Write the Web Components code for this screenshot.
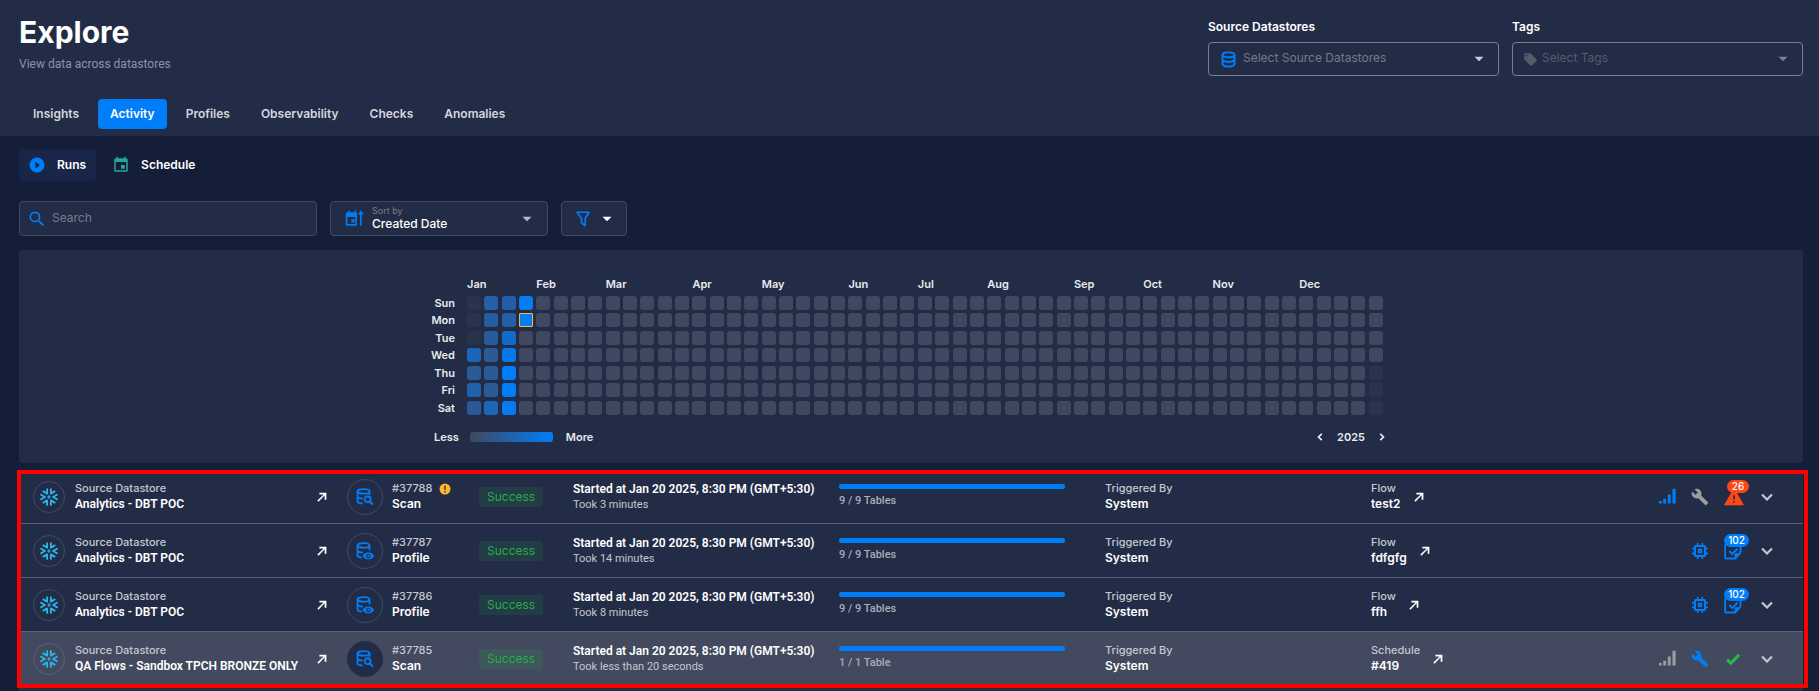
<!DOCTYPE html>
<html lang="en">
<head>
<meta charset="utf-8">
<title>Explore</title>
<style>
html{height:100%;background:#151e38}
body{margin:0;min-height:100%;font-family:Inter,"Noto Sans",sans-serif;font-size:12px;line-height:16px;color:#fff;
--page:#151e38;--panel:#232c46;--line:#424a62;--blue:#007df8;--compact:Roboto,"Noto Sans",sans-serif}
</style>
</head>
<body>
<explore-page></explore-page>
<script>
const ICONS={
search:'<path fill="currentColor" d="M9.5 3A6.5 6.5 0 0 1 16 9.5c0 1.61-.59 3.09-1.56 4.23l.27.27h.79l5 5-1.5 1.5-5-5v-.79l-.27-.27A6.52 6.52 0 0 1 9.5 16a6.5 6.5 0 0 1 0-13m0 2a4.5 4.5 0 1 0 0 9 4.5 4.5 0 0 0 0-9Z"/>',
down:'<path fill="none" stroke="currentColor" stroke-width="2.600" d="m6 9 6 6 6-6"/>',
left:'<path fill="none" stroke="currentColor" stroke-width="3" d="m15 6.500-5.500 5.500 5.500 5.500"/>',
right:'<path fill="none" stroke="currentColor" stroke-width="3" d="m9 6.500 5.500 5.500L9 17.500"/>',
caret:'<path fill="currentColor" d="m6 9 6 6 6-6z"/>',
play:'<path fill="currentColor" fill-rule="evenodd" d="M12 2a10 10 0 1 0 0 20 10 10 0 0 0 0-20M10 16.500v-9l6 4.500z"/>',
calendar:'<path fill="currentColor" d="M19 19H5V8h14m-3-7v2H8V1H6v2H5a2 2 0 0 0-2 2v14a2 2 0 0 0 2 2h14a2 2 0 0 0 2-2V5a2 2 0 0 0-2-2h-1V1m-1 11h-5v5h5z"/>',
sort:'<path fill="currentColor" fill-rule="evenodd" d="M3 4h1V2h2v2h6V2h2v2h1v17H1V6a2 2 0 0 1 2-2m0 6v9h10v-9zm5 3h4v4H8z"/><path fill="currentColor" d="M19 21V7h-3l4-5 4 5h-3v14z"/>',
filter:'<path fill="none" stroke="currentColor" stroke-width="2.200" stroke-linejoin="round" d="M4 3h16l-5 8v10l-5-4v-6z"/>',
tag:'<path fill="currentColor" fill-rule="evenodd" d="M21.410 11.580l-9-9A2 2 0 0 0 11 2H4a2 2 0 0 0-2 2v7c0 .55.220 1.050.590 1.410l9 9c.360.360.860.590 1.410.590s1.050-.230 1.410-.590l7-7c.370-.360.590-.860.590-1.410s-.230-1.060-.590-1.420M5.500 7a1.500 1.500 0 1 1 0-3 1.500 1.500 0 0 1 0 3z"/>',
database:'<g fill="none" stroke="currentColor" stroke-width="2.700"><ellipse cx="12" cy="5.500" rx="8.500" ry="3.500"/><path d="M3.500 5.500v13c0 1.800 4 3.500 8.500 3.500s8.500-1.700 8.500-3.500v-13M3.500 12c0 1.800 4 3.500 8.500 3.500s8.500-1.700 8.500-3.500"/></g>',
snow:'<g stroke="#29b5e8" stroke-width="2.500" fill="none" stroke-linecap="round" stroke-linejoin="round"><path d="M9.500 1.500v6L4.500 4.500M14.500 1.500v6l5-3M9.500 22.500v-6l-5 3M14.500 22.500v-6l5 3M1.500 9 6.500 12l-5 3M22.500 9l-5 3 5 3"/><path stroke-width="1.400" d="m12 10.300 1.700 1.700-1.700 1.700-1.700-1.700z"/></g>',
scan:'<g fill="none" stroke="currentColor" stroke-width="2.400"><ellipse cx="10" cy="4.500" rx="8" ry="3"/><path d="M2 4.500v13c0 2 3 3 7 3M2 11c0 2 3 3 7 3M18 4.500V9"/><circle cx="15.500" cy="15" r="4"/><path stroke-width="2.700" d="m18.500 18 4 4"/></g>',
profile:'<g fill="none" stroke="currentColor" stroke-width="2.400"><ellipse cx="10" cy="4.500" rx="8" ry="3"/><path d="M2 4.500v13c0 2 2 3 6 3M2 11c0 2 3 3 7 3M18 4.500V11"/></g><path fill="currentColor" fill-rule="evenodd" d="M9 18.500c2-6 13-6 15 0-2 6-13 6-15 0m7.500-3a3 3 0 1 0 0 6 3 3 0 0 0 0-6m0 1.500a1.500 1.500 0 1 1 0 3 1.500 1.500 0 0 1 0-3"/>',
open:'<path fill="currentColor" d="M4 18.200 14.800 7.500H7.500V4.500h12v12h-3V9.200L6 20.200z"/>',
warn:'<circle cx="12" cy="12" r="11" fill="#fcb72e"/><path d="M12 5v9M12 16v3" stroke="#232c46" stroke-width="2.500"/>',
signal:'<path fill="currentColor" d="M0 18.500h4V22H0zM6 15h4v7H6zM12.500 9h4v13h-4zM19 1h4.500v21H19z"/>',
wrench:'<path fill="currentColor" d="m22.700 19-9.100-9.100c.9-2.300.4-5-1.500-6.900-2-2-5-2.400-7.400-1.300L9 6 6 9 1.600 4.700C.4 7.100.9 10.100 2.900 12.100c1.900 1.900 4.600 2.400 6.900 1.500l9.100 9.100c.4.4 1 .4 1.400 0l2.300-2.300c.5-.4.5-1.100.1-1.400z"/>',
chip:'<g fill="none" stroke="currentColor" stroke-width="3"><rect x="4.500" y="4.500" width="15" height="15" rx="1"/><path stroke-width="2.500" d="M8.500 0v4M15.500 0v4M8.500 20v4M15.500 20v4M0 8.500h4M0 15.500h4M20 8.500h4M20 15.500h4M10 10h4v4h-4z"/></g>',
note:'<g fill="none" stroke="currentColor" stroke-width="2.400"><path d="M22 14V3H3a1.500 1.500 0 0 0-1.500 1.500v16A1.500 1.500 0 0 0 3 22h12l7-8"/><path d="m7 12 4 4 7-7"/></g><path fill="currentColor" d="M14 23v-8h9z"/>',
alert:'<path fill="currentColor" fill-rule="evenodd" d="M0 22h24L12 1zM11 10v5h2v-5zm0 7v2h2v-2z"/>',
check:'<path fill="currentColor" d="m9 20.420-6.210-6.210 2.830-2.830L9 14.770l9.880-9.890 2.830 2.830z"/>'
};
const SIZES={alert:20,signal:17,chip:16};
class Base extends HTMLElement{
  connectedCallback(){ if(!this.shadowRoot) this.attachShadow({mode:'open'}).innerHTML='<style>*{box-sizing:border-box}button,input,select{font:inherit;color:inherit;border:0;background:none;padding:0;margin:0;outline:0}a{color:inherit;text-decoration:none}</style>'+this.render(); }
  attr(n){ return this.getAttribute(n)||''; }
}
customElements.define('ui-icon',class extends Base{
  render(){const s=this.attr('size')||18;
  return `<style>:host{display:block;flex:none;width:${s}px;height:${s}px}svg{display:block}</style><svg width="${s}" height="${s}" viewBox="0 0 24 24" aria-hidden="true">${ICONS[this.attr('name')]}</svg>`}
});
customElements.define('filter-select',class extends Base{
  render(){return `<style>
  :host{display:block}
  label{display:block;font-weight:600}
  .box{display:flex;align-items:center;height:34px;margin-top:7px;padding:0 10px 0 11px;border:1px solid #7c7f86;border-radius:4px}
  .in{display:flex;align-items:center;gap:6px;flex:1;min-width:0;color:#777a82}
  select{flex:1;min-width:0;height:30px;padding-bottom:2px;appearance:none;opacity:1}
  ui-icon{color:var(--icon-color)} .caret{color:#cbcdd6}
  :host([disabled]) .in{gap:4px;color:#565b68} :host([disabled]) .box{padding-left:10px} :host([disabled]) .caret{color:#7d8291}
  </style><label for="s">${this.attr('label')}</label>
  <div class="box"><div class="in"><ui-icon name="${this.attr('icon')}" size="${this.attr('icon-size')}"></ui-icon><select id="s" ${this.hasAttribute('disabled')?'disabled':''}><option>${this.attr('placeholder')}</option></select></div><ui-icon class="caret" name="caret" size="18"></ui-icon></div>`}
});
customElements.define('page-header',class extends Base{
  render(){return `<style>
  :host{display:block;background:var(--panel);padding:0 16px 7px 19px}
  .top{display:flex;justify-content:space-between;min-height:99px}
  h1{margin:14px 0 0;font-size:30px;line-height:36px;font-weight:700}
  p{margin:6px 0 0;font-family:var(--compact);font-size:12px;color:#8e93a2}
  .filters{display:grid;grid-template-columns:1fr 1fr;gap:13px;width:34%;max-width:595px;padding-top:19px}
  .db{--icon-color:var(--blue)} .tag{--icon-color:#565b68}
  nav{display:flex;gap:7px;margin-left:2px}
  button{height:30px;padding:0 12px;border-radius:4px;font-weight:600;color:#d3d6dc}
  button[aria-selected=true]{background:var(--blue);color:#fff}
  </style>
  <div class="top"><div><h1>Explore</h1><p>View data across datastores</p></div>
  <div class="filters"><filter-select class="db" label="Source Datastores" icon="database" icon-size="17" placeholder="Select Source Datastores"></filter-select><filter-select class="tag" disabled label="Tags" icon="tag" icon-size="15" placeholder="Select Tags"></filter-select></div></div>
  <nav role="tablist">${['Insights','Activity','Profiles','Observability','Checks','Anomalies'].map(t=>`<button role="tab" aria-selected="${t==='Activity'}">${t}</button>`).join('')}</nav>`}
});
customElements.define('run-toolbar',class extends Base{
  render(){return `<style>
  :host{display:block;padding-top:13px}
  .views{display:flex;gap:7px}
  .views button{display:flex;align-items:center;gap:11px;height:32px;padding:0 10px 0 9px;border-radius:4px;font-weight:600}
  .views .on{background:#18264a}
  .views .on ui-icon{color:var(--blue)} .views button:last-child ui-icon{color:#26a69a}
  .controls{display:flex;gap:13px;margin-top:20px}
  .box{display:flex;align-items:center;height:35px;border:1px solid var(--line);border-radius:4px;background:var(--panel)}
  .blue{color:var(--blue)}
  .search{width:298px;padding:0 7px;gap:5px}
  input{flex:1;min-width:0;padding-bottom:2px} input::placeholder{color:#777c88;opacity:1}
  .sort{width:218px;padding:0 11px 0 14px;gap:8px}
  .field{flex:1;min-width:0}
  .field label{display:block;font-size:9px;line-height:10px;color:#777c88;padding-top:1px}
  .field select{display:block;width:100%;height:16px;appearance:none;font-weight:500}
  .caret{color:#b5b9c3}
  .filter{width:66px;justify-content:center;gap:6px;padding:0 5px 0 6px}
  </style>
  <div class="views"><button class="on"><ui-icon name="play" size="18"></ui-icon>Runs</button><button><ui-icon name="calendar" size="18"></ui-icon>Schedule</button></div>
  <div class="controls"><div class="box search"><ui-icon class="blue" name="search" size="20"></ui-icon><input type="search" aria-label="Search" placeholder="Search"></div>
  <div class="box sort"><ui-icon class="blue" name="sort" size="19"></ui-icon><div class="field"><label for="sort">Sort by</label><select id="sort"><option>Created Date</option></select></div><ui-icon class="caret" name="caret" size="18"></ui-icon></div>
  <button class="box filter" aria-label="Filter"><ui-icon class="blue" name="filter" size="18"></ui-icon><ui-icon name="caret" size="18"></ui-icon></button></div>`}
});
customElements.define('activity-heatmap',class extends Base{
  render(){
    const hot=[['','','','#1b66b9','#2a5995','#2161ac','#2a5995'],['#2460a8','#265d9f','#2a5b99','#2c5a94','#2a5a97','#2a5a97','#1c66b8'],['#225fab','#245fa6','#136bc9','#0479ea','#007df8','#007df8','#067bf0'],['#057cf2','#057cf2 sel']];
    const months=[['Jan',0],['Feb',4],['Mar',8],['Apr',13],['May',17],['Jun',22],['Jul',26],['Aug',30],['Sep',35],['Oct',39],['Nov',43],['Dec',48]];
    let cells='';
    for(let c=0;c<53;c++)for(let r=0;r<7;r++){
      const out=(c===0&&r<3)||(c===52&&r>3), v=(hot[c]||[])[r]||'', [col,sel]=v.split(' ');
      cells+=`<i class="${out?'out':''} ${sel||''}" ${col?`style="background:${col}"`:''}></i>`;
    }
    return `<style>
  :host{display:flex;justify-content:center;min-height:213px;margin-top:14px;padding:25px 18px 14px 16px;background:var(--panel);border-radius:4px;font-size:11px;font-weight:600;color:#e8eaef}
  .wrap{width:952px;display:grid;grid-template-columns:21px 1fr;column-gap:12px;align-content:start}
  .months{grid-column:2;display:grid;grid-template-columns:repeat(53,minmax(0,1fr));height:21px;line-height:18px;white-space:nowrap}
  .days{display:grid;grid-template-columns:21px;grid-template-rows:repeat(7,1fr);height:122px;text-align:right;line-height:14px;justify-items:end}
  .cells{display:grid;grid-auto-flow:column;grid-template-rows:repeat(7,1fr);grid-auto-columns:minmax(0,1fr);height:122px}
  i{width:14px;height:14px;border-radius:3px;background:#40485f}
  .out{background:#2a334c} .sel{border:1px solid #fcb72e;border-radius:1px}
  .foot{grid-column:1/-1;display:flex;align-items:center;height:16px;margin-top:11px}
  .bar{width:83px;height:10px;margin:0 13px 0 11px;border-radius:3px;background:linear-gradient(90deg,#40485f,#007df8)}
  .year{display:flex;align-items:center;gap:10px;margin:0 -3px 0 auto}
  .year button{display:flex}
  </style>
  <div class="wrap"><div class="months">${months.map(m=>`<span style="grid-column:${m[1]+1};grid-row:1">${m[0]}</span>`).join('')}</div>
  <div class="days">${['Sun','Mon','Tue','Wed','Thu','Fri','Sat'].map(d=>`<span>${d}</span>`).join('')}</div><div class="cells">${cells}</div>
  <div class="foot"><span>Less</span><span class="bar"></span><span>More</span><span class="year"><button aria-label="Previous year"><ui-icon name="left" size="14"></ui-icon></button><span>2025</span><button aria-label="Next year"><ui-icon name="right" size="14"></ui-icon></button></span></div></div>`}
});
customElements.define('count-badge',class extends Base{
  render(){return `<style>:host{position:absolute;top:-7px;right:-7px;min-width:22px;height:13px;padding:0 4px;border-radius:7px;background:currentColor;font-size:10px;line-height:13px;font-weight:500;text-align:center}span{color:#fff}</style><span><slot></slot></span>`}
});
customElements.define('run-row',class extends Base{
  render(){
    const a=n=>this.attr(n), scan=a('op')==='Scan';
    const link=`<a href="#" aria-label="Open"><ui-icon name="open" size="14"></ui-icon></a>`;
    const acts=a('acts').split(',').map(x=>{const [n,c,k]=x.split(':');return `<span class="act ${c}"><ui-icon name="${n}" size="${SIZES[n]||18}"></ui-icon>${k?`<count-badge>${k}</count-badge>`:''}</span>`}).join('');
    return `<style>
  :host{display:grid;grid-template-columns:minmax(0,314fr) minmax(0,132fr) minmax(0,94fr) repeat(3,minmax(0,266fr)) minmax(0,210fr) minmax(0,210fr);align-items:center;height:54px;padding:0 12px 0 14px;background:var(--panel);border-bottom:1px solid #5c6377;font-weight:600}
  :host([active]){background:#434a5f}
  .store,.op,.flow,.acts{display:flex;align-items:center}
  .mark{display:grid;place-items:center;flex:none;width:32px;height:32px;margin-right:10px;border:1px solid #424a62;border-radius:50%}
  .op .mark{width:36px;height:36px;margin-right:9px;color:var(--blue)}
  :host([active]) .mark{border-color:#5b6277} :host([active]) .op .mark{background:var(--panel);border-color:var(--panel)}
  .store a{margin-left:auto;margin-right:18px}
  .two span,.two b{display:block;white-space:nowrap}
  .two span{font-size:11px;line-height:15px;color:#c5c8d0;font-weight:500}
  .two b{font-size:12px;line-height:16px;font-weight:600}
  .store b,.when b{font-family:var(--compact)}
  .two .num{display:flex;align-items:center;gap:7px}
  .chip{justify-self:start;height:20px;padding:0 8px;border-radius:3px;line-height:20px;background:rgba(30,180,70,.13);color:#22ad4a;font-weight:400}
  .when em{display:block;font-style:normal;font-family:var(--compact);font-weight:400;font-size:11px;line-height:16px;color:#c5c8d0}
  progress{display:block;appearance:none;width:calc(100% - 40px);height:5px;margin-bottom:4px;border:0;border-radius:2px;overflow:hidden;background:#424a62}
  progress::-webkit-progress-bar{background:#424a62} progress::-webkit-progress-value{background:var(--blue)}
  .tables{font-family:var(--compact);font-size:11px;line-height:16px;font-weight:500;color:#a9adb9}
  .flow{gap:11px}
  .acts{justify-content:flex-end;gap:15px;padding-right:16px}
  .acts button,.act{position:relative;display:grid;place-items:center;width:18px;height:20px}
  .blue{color:var(--blue)} .grey{color:#9c9c9c} .red{color:#ff4713} .green{color:#27b84a} .down{color:#c3c6cf}
  </style>
  <div class="store"><span class="mark"><ui-icon name="snow" size="18"></ui-icon></span><div class="two"><span>Source Datastore</span><b>${a('store')}</b></div>${link}</div>
  <div class="op"><span class="mark"><ui-icon name="${scan?'scan':'profile'}" size="18"></ui-icon></span><div class="two"><span class="num">#${a('run')}${this.hasAttribute('warning')?'<ui-icon name="warn" size="12"></ui-icon>':''}</span><b>${a('op')}</b></div></div>
  <div class="chip">Success</div>
  <div class="two when"><b>Started at Jan 20 2025, 8:30 PM (GMT+5:30)</b><em>${a('took')}</em></div>
  <div><progress max="1" value="1" aria-label="Progress"></progress><div class="tables">${a('tables')}</div></div>
  <div class="two"><span>Triggered By</span><b>System</b></div>
  <div class="flow"><div class="two"><span>${a('kind')}</span><b>${a('flow')}</b></div>${link}</div>
  <div class="acts">${acts}<button class="down" aria-label="Expand"><ui-icon name="down" size="20"></ui-icon></button></div>`}
});
customElements.define('run-list',class extends Base{
  render(){return `<style>
  :host{display:block;position:relative;margin-top:7px}
  .next{height:5px;background:var(--panel)}
  .frame{position:absolute;inset:0 -5px 3px -2px;border:4px solid #f00;pointer-events:none}
  </style><slot></slot><div class="next"></div><div class="frame"></div>`}
});
customElements.define('explore-page',class extends Base{
  render(){return `<style>
  :host{display:block} main{padding:0 16px 0 19px}
  </style><page-header></page-header><main><run-toolbar></run-toolbar><activity-heatmap></activity-heatmap>
  <run-list>
  <run-row store="Analytics - DBT POC" run="37788" warning op="Scan" took="Took 3 minutes" tables="9 / 9 Tables" kind="Flow" flow="test2" acts="signal:blue,wrench:grey,alert:red:26"></run-row>
  <run-row store="Analytics - DBT POC" run="37787" op="Profile" took="Took 14 minutes" tables="9 / 9 Tables" kind="Flow" flow="fdfgfg" acts="chip:blue,note:blue:102"></run-row>
  <run-row store="Analytics - DBT POC" run="37786" op="Profile" took="Took 8 minutes" tables="9 / 9 Tables" kind="Flow" flow="ffh" acts="chip:blue,note:blue:102"></run-row>
  <run-row active store="QA Flows - Sandbox TPCH BRONZE ONLY" run="37785" op="Scan" took="Took less than 20 seconds" tables="1 / 1 Table" kind="Schedule" flow="#419" acts="signal:grey,wrench:blue,check:green"></run-row>
  </run-list></main>`}
});
</script>
</body>
</html>
